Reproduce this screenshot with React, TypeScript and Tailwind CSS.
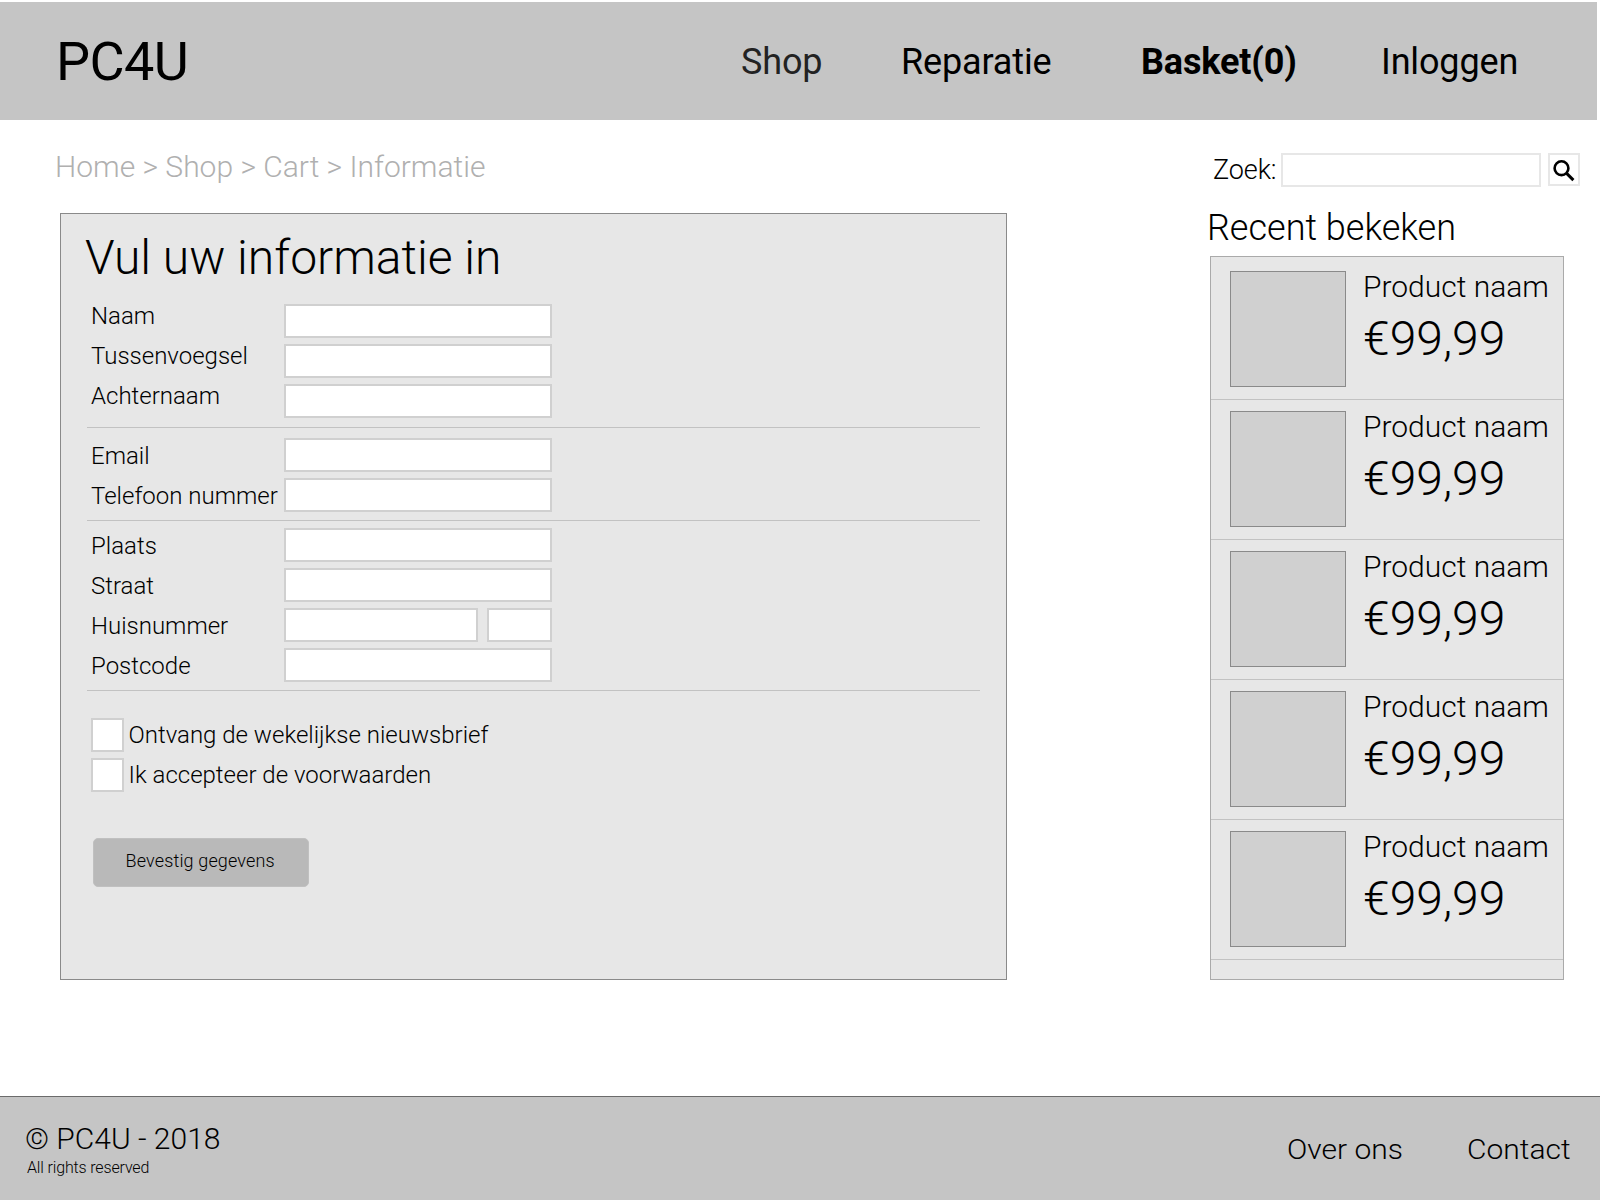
import React from "react";

const PRODUCTS = [1, 2, 3, 4, 5].map((id) => ({ id, name: "Product naam", price: "€99,99" }));

function Field({ label, raised = false, split = false }: { label: string; raised?: boolean; split?: boolean }) {
  return (
    <label className="flex h-[34px] items-start">
      <span
        className={`w-[193px] shrink-0 whitespace-nowrap text-[24px] leading-[24px] ${raised ? "" : "mt-[6px]"}`}
      >
        {label}
      </span>
      {split ? (
        <span className="flex gap-[9px]">
          <input className="h-[34px] w-[194px] border-2 border-[#d0d0d0] bg-white" />
          <input className="h-[34px] w-[65px] border-2 border-[#d0d0d0] bg-white" />
        </span>
      ) : (
        <input className="h-[34px] w-[268px] border-2 border-[#d0d0d0] bg-white" />
      )}
    </label>
  );
}

function Check({ label }: { label: string }) {
  return (
    <label className="flex h-[34px] items-start gap-[4.5px]">
      <input type="checkbox" className="h-[34px] w-[33px] shrink-0 appearance-none border-2 border-[#d0d0d0] bg-white" />
      <span className="mt-[5px] whitespace-nowrap text-[24px] leading-[24px]">{label}</span>
    </label>
  );
}

function Divider({ className }: { className: string }) {
  return <div className={`ml-[26px] h-px w-[893px] bg-[#c2c2c2] ${className}`} />;
}

export default function App() {
  return (
    <div className="flex h-[1200px] w-[1600px] flex-col overflow-hidden bg-white pt-[2px] font-['Roboto',sans-serif] font-light text-black">
      <header className="flex h-[118px] w-[1597px] shrink-0 items-start whitespace-nowrap bg-[#c5c5c5] pl-14 font-normal">
        <div className="mt-[33px] w-[685px] text-[54px] leading-[54px] tracking-[-0.6px]">PC4U</div>
        <nav className="mt-[42px] flex text-[36px] leading-[36px] tracking-[-0.15px]">
          <a className="w-[160px] text-[#222222]">Shop</a>
          <a className="w-[240px]">Reparatie</a>
          <a className="w-[240px] font-bold">Basket(0)</a>
          <a>Inloggen</a>
        </nav>
      </header>

      <main className="flex h-[976px] shrink-0 items-start">
        <section className="w-[1207px] pl-[60px] pt-8">
          <div className="-ml-[5px] whitespace-nowrap text-[30px] leading-[30px] text-[#b0b0b0]">
            Home &gt; Shop &gt; Cart &gt; Informatie
          </div>
          <form className="mt-[31px] h-[767px] w-[947px] border border-[#8a8a8a] bg-[#e7e7e7] pt-5">
            <h1 className="ml-6 text-[48px] leading-[48px]">Vul uw informatie in</h1>
            <div className="ml-[30px] mt-[22px] flex flex-col gap-[6px]">
              <Field label="Naam" raised />
              <Field label="Tussenvoegsel" raised />
              <Field label="Achternaam" raised />
            </div>
            <Divider className="mt-[9px]" />
            <div className="ml-[30px] mt-[10px] flex flex-col gap-[6px]">
              <Field label="Email" />
              <Field label="Telefoon nummer" />
            </div>
            <Divider className="mt-2" />
            <div className="ml-[30px] mt-[7px] flex flex-col gap-[6px]">
              <Field label="Plaats" />
              <Field label="Straat" />
              <Field label="Huisnummer" split />
              <Field label="Postcode" />
            </div>
            <Divider className="mt-2" />
            <div className="ml-[30px] mt-[27px] flex flex-col gap-[6px]">
              <Check label="Ontvang de wekelijkse nieuwsbrief" />
              <Check label="Ik accepteer de voorwaarden" />
            </div>
            <button
              type="button"
              className="ml-8 mt-[46px] flex h-[49px] w-[216px] items-start rounded-[5px] border border-[#c0c0c0] bg-[#b9b9b9] pl-[31.5px] pt-[13px] text-[18px] font-light leading-[18px] tracking-[0.15px]"
            >
              Bevestig gegevens
            </button>
          </form>
        </section>

        <aside className="flex flex-col items-start pt-[33px]">
          <div className="ml-[6px] flex items-start">
            <span className="mt-1 w-[68px] text-[27px] leading-[27px] tracking-[-0.1px]">Zoek:</span>
            <input className="h-[34px] w-[260px] border-2 border-[#e7e7e7] bg-white" />
            <button
              type="button"
              aria-label="Zoek"
              className="ml-[7px] flex h-[33px] w-8 items-center justify-center border-2 border-[#e7e7e7] bg-white"
            >
              <svg viewBox="0 0 28 29" className="h-[29px] w-7 shrink-0" fill="none" stroke="#000">
                <circle cx="11.5" cy="13.2" r="6.9" strokeWidth="2.6" />
                <path d="M16.4 18.1 L23.4 25.1" strokeWidth="3" />
              </svg>
            </button>
          </div>
          <h2 className="mt-[23px] whitespace-nowrap text-[36px] leading-[36px]">Recent bekeken</h2>
          <div className="ml-[3px] mt-[10px] h-[724px] w-[354px] border border-[#aaaaaa] bg-[#e7e7e7] pt-[3px]">
            {PRODUCTS.map((p) => (
              <article key={p.id} className="flex h-[140px] border-b border-[#c2c2c2] pl-[19px] pt-[11px]">
                <div className="size-[116px] shrink-0 border border-[#8a8a8a] bg-[#d0d0d0]" />
                <div className="ml-[17px] whitespace-nowrap">
                  <div className="mt-px text-[30px] leading-[30px]">{p.name}</div>
                  <div className="mt-[13px] text-[48px] leading-[48px]">{p.price}</div>
                </div>
              </article>
            ))}
          </div>
        </aside>
      </main>

      <footer className="flex h-[104px] shrink-0 items-start whitespace-nowrap border-t border-[#6b6b6b] bg-[#c5c5c5]">
        <div className="w-[1286.5px] pl-[25px] pt-[27px]">
          <div className="text-[30px] leading-[30px]">© PC4U - 2018</div>
          <div className="ml-[2px] mt-[6px] text-[16px] leading-[16px] tracking-[-0.15px]">All rights reserved</div>
        </div>
        <nav className="mt-10 flex text-[27px] leading-[27px]">
          <a className="w-[180px] origin-left scale-x-[1.11]">Over ons</a>
          <a className="origin-left scale-x-[1.11]">Contact</a>
        </nav>
      </footer>
    </div>
  );
}
